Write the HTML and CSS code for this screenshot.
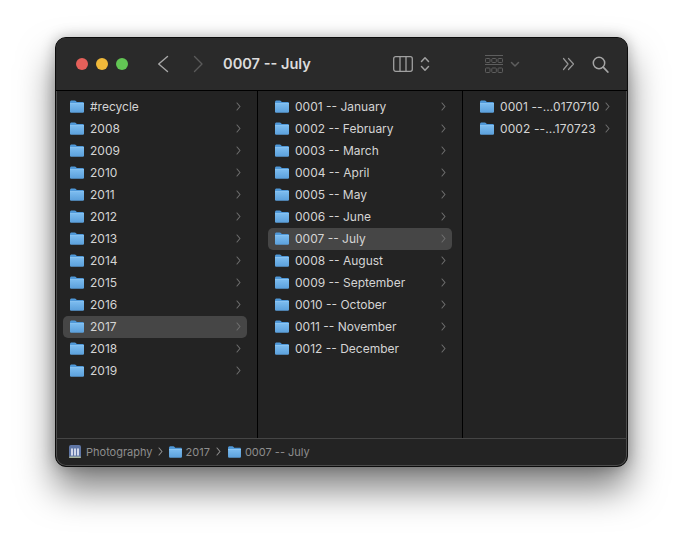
FILE: index.html
```html
<!DOCTYPE html>
<html lang="en">
<head>
<meta charset="utf-8">
<title>0007 -- July</title>
<link rel="stylesheet" href="styles.css">
</head>
<body>
<svg class="defs" width="0" height="0" aria-hidden="true">
  <defs>
    <linearGradient id="fg" x1="0" y1="0" x2="0" y2="1">
      <stop offset="0" stop-color="#7dbdf0"/>
      <stop offset="1" stop-color="#5a9fdb"/>
    </linearGradient>
    <symbol id="folder" viewBox="0 0 14 13">
      <path d="M0 2.200C0 1 .7.4 1.600.4h3c.7 0 1 .2 1.400.7l.7.8H12.600c.9 0 1.400.6 1.400 1.400v1H0z" fill="#4f98d8"/>
      <path d="M0 3.200h14v8.200c0 .9-.6 1.400-1.400 1.400H1.400C.6 12.800 0 12.300 0 11.400z" fill="url(#fg)"/>
      <path d="M0 3.200h14v.6H0z" fill="#9ccff6"/>
    </symbol>
    <symbol id="chev" viewBox="0 0 5 9">
      <path d="M1 1l3 3.500-3 3.500" fill="none" stroke="currentColor" stroke-width="1.100" stroke-linecap="round" stroke-linejoin="round"/>
    </symbol>
  </defs>
</svg>
<main class="window">
  <header class="toolbar">
    <div class="lights">
      <span class="light red"></span>
      <span class="light yellow"></span>
      <span class="light green"></span>
    </div>
    <svg class="nav back" width="12" height="18" viewBox="0 0 12 18"><path d="M10.500 1.500L1.700 9l8.800 7.500" fill="none" stroke="#a6a6a6" stroke-width="1.400" stroke-linecap="round" stroke-linejoin="round"/></svg>
    <svg class="nav fwd" width="12" height="18" viewBox="0 0 12 18"><path d="M1.500 1.500l7.500 7.500-7.500 7.500" fill="none" stroke="#5a5a5a" stroke-width="1.400" stroke-linecap="round" stroke-linejoin="round"/></svg>
    <h1 class="title">0007 -- July</h1>
    <svg class="tool view" width="20" height="16" viewBox="0 0 20 16"><rect x=".7" y=".7" width="18.600" height="14.600" rx="2" fill="none" stroke="#a0a0a0" stroke-width="1.300"/><path d="M7 1v14M13 1v14" stroke="#a0a0a0" stroke-width="1.300"/></svg>
    <svg class="tool updown" width="10" height="16" viewBox="0 0 10 16"><path d="M1.500 5.500L5 1.800l3.500 3.700M1.500 10.500L5 14.200l3.500-3.700" fill="none" stroke="#a0a0a0" stroke-width="1.500" stroke-linecap="round" stroke-linejoin="round"/></svg>
    <svg class="tool group" width="19" height="19" viewBox="0 0 19 19"><path d="M0 .5h18M0 9.500h18" stroke="#5e5e5e"/><g fill="none" stroke="#5e5e5e"><rect x=".5" y="3.500" width="4.500" height="4" rx=".8"/><rect x="6.800" y="3.500" width="4.500" height="4" rx=".8"/><rect x="13" y="3.500" width="4.500" height="4" rx=".8"/><rect x=".5" y="13" width="4.500" height="4.500" rx=".8"/><rect x="6.800" y="13" width="4.500" height="4.500" rx=".8"/><rect x="13" y="13" width="4.500" height="4.500" rx=".8"/></g></svg>
    <svg class="tool drop" width="10" height="7" viewBox="0 0 10 7"><path d="M1.500 1.500L5 5l3.500-3.500" fill="none" stroke="#5e5e5e" stroke-width="1.500" stroke-linecap="round" stroke-linejoin="round"/></svg>
    <svg class="tool more" width="13" height="14" viewBox="0 0 13 14"><path d="M1.500 1.500L6 7l-4.500 5.500M6.500 1.500L11.500 7l-5 5.500" fill="none" stroke="#969696" stroke-width="1.200" stroke-linecap="round" stroke-linejoin="round"/></svg>
    <svg class="tool search" width="17" height="17" viewBox="0 0 17 17"><circle cx="7" cy="7" r="5.700" fill="none" stroke="#a6a6a6" stroke-width="1.500"/><path d="M11.200 11.200l4.600 4.800" stroke="#a6a6a6" stroke-width="1.800" stroke-linecap="round"/></svg>
  </header>
  <section class="columns">
    <ul class="col col-one">
      <li class="row"><svg class="folder"><use href="#folder"/></svg><span class="name">#recycle</span><svg class="chev"><use href="#chev"/></svg></li>
      <li class="row"><svg class="folder"><use href="#folder"/></svg><span class="name">2008</span><svg class="chev"><use href="#chev"/></svg></li>
      <li class="row"><svg class="folder"><use href="#folder"/></svg><span class="name">2009</span><svg class="chev"><use href="#chev"/></svg></li>
      <li class="row"><svg class="folder"><use href="#folder"/></svg><span class="name">2010</span><svg class="chev"><use href="#chev"/></svg></li>
      <li class="row"><svg class="folder"><use href="#folder"/></svg><span class="name">2011</span><svg class="chev"><use href="#chev"/></svg></li>
      <li class="row"><svg class="folder"><use href="#folder"/></svg><span class="name">2012</span><svg class="chev"><use href="#chev"/></svg></li>
      <li class="row"><svg class="folder"><use href="#folder"/></svg><span class="name">2013</span><svg class="chev"><use href="#chev"/></svg></li>
      <li class="row"><svg class="folder"><use href="#folder"/></svg><span class="name">2014</span><svg class="chev"><use href="#chev"/></svg></li>
      <li class="row"><svg class="folder"><use href="#folder"/></svg><span class="name">2015</span><svg class="chev"><use href="#chev"/></svg></li>
      <li class="row"><svg class="folder"><use href="#folder"/></svg><span class="name">2016</span><svg class="chev"><use href="#chev"/></svg></li>
      <li class="row selected"><svg class="folder"><use href="#folder"/></svg><span class="name">2017</span><svg class="chev"><use href="#chev"/></svg></li>
      <li class="row"><svg class="folder"><use href="#folder"/></svg><span class="name">2018</span><svg class="chev"><use href="#chev"/></svg></li>
      <li class="row"><svg class="folder"><use href="#folder"/></svg><span class="name">2019</span><svg class="chev"><use href="#chev"/></svg></li>
    </ul>
    <ul class="col col-two">
      <li class="row"><svg class="folder"><use href="#folder"/></svg><span class="name">0001 -- January</span><svg class="chev"><use href="#chev"/></svg></li>
      <li class="row"><svg class="folder"><use href="#folder"/></svg><span class="name">0002 -- February</span><svg class="chev"><use href="#chev"/></svg></li>
      <li class="row"><svg class="folder"><use href="#folder"/></svg><span class="name">0003 -- March</span><svg class="chev"><use href="#chev"/></svg></li>
      <li class="row"><svg class="folder"><use href="#folder"/></svg><span class="name">0004 -- April</span><svg class="chev"><use href="#chev"/></svg></li>
      <li class="row"><svg class="folder"><use href="#folder"/></svg><span class="name">0005 -- May</span><svg class="chev"><use href="#chev"/></svg></li>
      <li class="row"><svg class="folder"><use href="#folder"/></svg><span class="name">0006 -- June</span><svg class="chev"><use href="#chev"/></svg></li>
      <li class="row selected"><svg class="folder"><use href="#folder"/></svg><span class="name">0007 -- July</span><svg class="chev"><use href="#chev"/></svg></li>
      <li class="row"><svg class="folder"><use href="#folder"/></svg><span class="name">0008 -- August</span><svg class="chev"><use href="#chev"/></svg></li>
      <li class="row"><svg class="folder"><use href="#folder"/></svg><span class="name">0009 -- September</span><svg class="chev"><use href="#chev"/></svg></li>
      <li class="row"><svg class="folder"><use href="#folder"/></svg><span class="name">0010 -- October</span><svg class="chev"><use href="#chev"/></svg></li>
      <li class="row"><svg class="folder"><use href="#folder"/></svg><span class="name">0011 -- November</span><svg class="chev"><use href="#chev"/></svg></li>
      <li class="row"><svg class="folder"><use href="#folder"/></svg><span class="name">0012 -- December</span><svg class="chev"><use href="#chev"/></svg></li>
    </ul>
    <ul class="col col-three">
      <li class="row"><svg class="folder"><use href="#folder"/></svg><span class="name">0001 --...0170710</span><svg class="chev"><use href="#chev"/></svg></li>
      <li class="row"><svg class="folder"><use href="#folder"/></svg><span class="name">0002 --...170723</span><svg class="chev"><use href="#chev"/></svg></li>
    </ul>
  </section>
  <footer class="pathbar">
    <svg class="vol" width="12" height="13" viewBox="0 0 12 13"><rect width="12" height="13" rx="2" fill="#5f76a6"/><rect y="11.500" width="12" height="1.500" rx=".7" fill="#a9b7a0"/><path d="M3 4v6M6 4v6M9 4v6" stroke="#eef2fa" stroke-width="1.600" stroke-linecap="round"/></svg>
    <span class="crumb">Photography</span>
    <svg class="sep"><use href="#chev"/></svg>
    <svg class="folder small"><use href="#folder"/></svg>
    <span class="crumb">2017</span>
    <svg class="sep sep-wide"><use href="#chev"/></svg>
    <svg class="folder small"><use href="#folder"/></svg>
    <span class="crumb">0007 -- July</span>
  </footer>
</main>
</body>
</html>
```
FILE: styles.css
```css
* { box-sizing: border-box; }
html, body { margin: 0; padding: 0; }
body {
  width: 683px;
  height: 540px;
  overflow: hidden;
  background: #fff;
  font-family: Inter, "Liberation Sans", sans-serif;
}
.defs { display: block; height: 0; }
.window {
  width: 573px;
  height: 430px;
  margin: 37px 0 0 55px;
  display: flex;
  flex-direction: column;
  background: #232323;
  border: 1px solid #0c0c0c;
  border-radius: 11px;
  box-shadow: inset 0 0 0 1px #4c4c4c, 0 22px 36px rgba(0, 0, 0, .5), 0 0 14px rgba(0, 0, 0, .25);
  overflow: hidden;
}
.toolbar {
  height: 53px;
  flex: none;
  display: flex;
  align-items: center;
  padding-left: 20px;
  border-bottom: 1px solid #000;
  background: #2a2a2a;
}
.lights { display: flex; gap: 8px; }
.light { width: 12px; height: 12px; border-radius: 50%; }
.red { background: #e5605a; }
.yellow { background: #f0b93a; }
.green { background: #62c554; }
.nav.back { margin-left: 29px; }
.nav.fwd { margin-left: 24px; }
.title {
  margin: 0 0 1px 18px;
  width: 170px;
  font-size: 14.6px;
  font-weight: 600;
  color: #dcdcdc;
}
.tool { flex: none; }
.updown { margin-left: 7px; }
.group { margin-left: 55px; }
.drop { margin-left: 6px; }
.more { margin-left: 42px; }
.search { margin-left: 17px; }
.columns { flex: 1; display: flex; min-height: 0; }
.col {
  list-style: none;
  margin: 0;
  padding: 5px 10px 0;
  height: 100%;
}
.col-one { width: 202px; padding-left: 7px; border-right: 1px solid #000; }
.col-two { width: 205px; border-right: 1px solid #000; }
.col-three { flex: 1; }
.row {
  height: 22px;
  display: flex;
  align-items: center;
  padding: 0 0 2px 7px;
  border-radius: 5px;
  color: #d4d4d4;
  font-size: 12px;
}
.row.selected { background: #464646; }
.folder { width: 14px; height: 13px; flex: none; }
.name { margin-left: 6px; flex: 1; white-space: nowrap; }
.chev { width: 5px; height: 9px; flex: none; margin-right: 6px; color: #6f6f6f; }
.col-three .chev { margin-right: 7px; }
.col-three .name { letter-spacing: .1px; }
.pathbar {
  height: 28px;
  flex: none;
  display: flex;
  align-items: center;
  padding: 0 0 2px 13px;
  border-top: 1px solid #454545;
  color: #8e8e8e;
  font-size: 11px;
}
.vol { flex: none; }
.crumb { margin-left: 4px; white-space: nowrap; }
.vol + .crumb { margin-left: 5px; }
.sep { width: 5px; height: 9px; flex: none; margin: 0 6px 0 5px; color: #8e8e8e; }
.sep-wide { margin: 0 7px 0 6px; }
.folder.small { width: 13px; height: 12px; }
.small + .crumb { margin-left: 4px; }
```
